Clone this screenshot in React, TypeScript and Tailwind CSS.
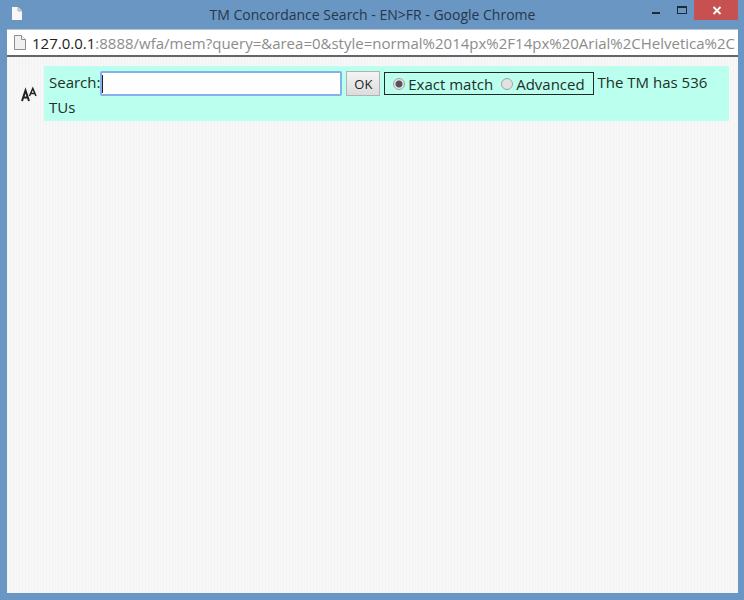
import { useState } from 'react';

const MODES = [
  { value: 'exact', label: 'Exact match' },
  { value: 'advanced', label: 'Advanced' },
];

function PageIcon({ className }: { className: string }) {
  return (
    <svg className={className} viewBox="0 0 12 15" fill="none" aria-hidden="true">
      <path d="M.5.5h7l4 4v10H.5z" fill="#f0f0f0" stroke="#8f8f8f" />
      <path d="M7.5.5v4h4" fill="#fff" stroke="#8f8f8f" />
    </svg>
  );
}

function TitleBar() {
  return (
    <header className="relative flex h-[29px] shrink-0 items-center justify-center text-[14px] leading-5 text-[#26384c]">
      <svg className="absolute top-[7px] left-[5px] h-[13px] w-[10px]" viewBox="0 0 10 13" aria-hidden="true">
        <path d="M0 0h6l4 4v9H0z" fill="#f7f7f7" />
        <path d="M6 0v4h4" fill="#d5d5d5" stroke="#9b9b9b" strokeWidth=".7" />
      </svg>
      <h1>TM Concordance Search - EN&gt;FR - Google Chrome</h1>
      <div className="absolute top-0 right-0 flex h-5">
        <button type="button" aria-label="Minimize" className="w-[26px]">
          <svg className="h-5 w-[26px]" viewBox="0 0 26 20" aria-hidden="true">
            <path d="M10 12h8v2h-8z" fill="#1e2a36" />
          </svg>
        </button>
        <button type="button" aria-label="Maximize" className="w-[26px]">
          <svg className="h-5 w-[26px]" viewBox="0 0 26 20" aria-hidden="true">
            <path d="M9 6h10v8H9zM10 8v5h8V8z" fill="#1e2a36" fillRule="evenodd" />
          </svg>
        </button>
        <button type="button" aria-label="Close" className="w-11 bg-[#c75050]">
          <svg className="h-5 w-11" viewBox="0 0 44 20" aria-hidden="true">
            <path d="M19.500 7l7 7M26.500 7l-7 7" stroke="#fff" strokeWidth="1.800" />
          </svg>
        </button>
      </div>
    </header>
  );
}

function AddressBar() {
  return (
    <div className="flex h-7 shrink-0 items-center gap-[6px] overflow-hidden border-t border-b-2 border-t-[#b5c6d8] border-b-[#66636a] bg-white pr-[3px] pl-[7px] text-[15px] leading-5">
      <PageIcon className="h-[15px] w-3 shrink-0" />
      <p className="overflow-hidden whitespace-nowrap text-[#8c8c8c]">
        <span className="text-[#222]">127.0.0.1</span>
        :8888/wfa/mem?query=&amp;area=0&amp;style=normal%2014px%2F14px%20Arial%2CHelvetica%2CSans-serif
      </p>
    </div>
  );
}

function SearchForm() {
  const [query, setQuery] = useState('');
  const [mode, setMode] = useState('exact');

  return (
    <form
      className="flex-1 bg-[#bbffee] px-[5px] pt-[5px] pb-[3px] text-[15px] leading-[22px] text-[#1b3029]"
      onSubmit={(e) => e.preventDefault()}
    >
      <label htmlFor="query">Search:</label>
      <span className="relative inline-block align-middle">
        <input
          id="query"
          type="text"
          value={query}
          onChange={(e) => setQuery(e.target.value)}
          className="block h-[25px] w-[242px] rounded-[2px] border-2 border-[#84b1ea] bg-white px-[2px] outline-none"
        />
        {/* caret */}
        <span className="absolute top-1 left-[2px] h-[18px] w-px bg-[#222]" />
      </span>{' '}
      <button
        type="submit"
        className="h-[25px] w-[34px] border border-[#b3b3b3] bg-linear-to-b from-[#f4f4f4] to-[#dcdcdc] align-middle text-[13px] leading-5 text-[#222]"
      >
        OK
      </button>{' '}
      <span className="inline-flex h-[23px] items-center gap-2 border border-[#1d2b27] px-2 align-middle">
        {MODES.map((m) => (
          <label key={m.value} className="flex items-center gap-[3px]">
            <input
              type="radio"
              name="mode"
              value={m.value}
              checked={mode === m.value}
              onChange={() => setMode(m.value)}
              className="size-3 appearance-none rounded-full border border-[#a3a3a3] bg-[#e2e2e2] checked:bg-[radial-gradient(circle,#555_0_3px,#e6e6e6_4px)]"
            />
            {m.label}
          </label>
        ))}
      </span>{' '}
      The TM has 536 TUs
    </form>
  );
}

export default function App() {
  return (
    <div className="flex h-screen flex-col bg-[#6996c2] pr-[6px] pb-[7px] pl-[7px] font-['Open_Sans','Noto_Sans',sans-serif]">
      <TitleBar />
      <AddressBar />
      <main className="flex flex-1 items-start bg-[repeating-linear-gradient(90deg,#f3f3f3_0_1px,#f7f7f7_1px_3px)] pt-[9px] pr-[9px]">
        <button type="button" aria-label="Text size" className="mt-5 mr-[7px] ml-[14px] h-4 w-4">
          <svg className="h-4 w-4" viewBox="0 0 16 16" fill="none" stroke="#222" aria-hidden="true">
            <path d="M1 15L4.500 4.500L8 15M2.500 11.500h4" strokeWidth="2" />
            <path d="M8.500 10L11.800 2.500L15 10M9.800 7.500h4" strokeWidth="1.500" />
          </svg>
        </button>
        <SearchForm />
      </main>
    </div>
  );
}
